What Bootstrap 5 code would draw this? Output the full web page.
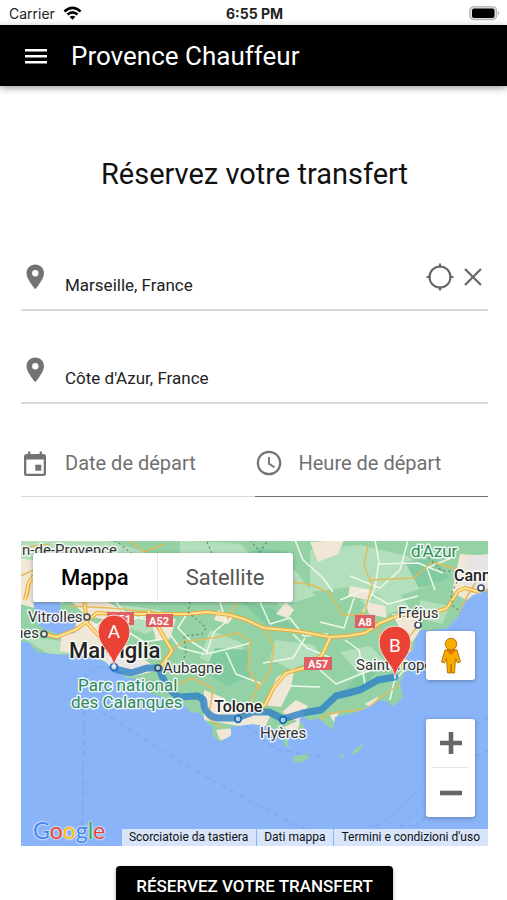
<!DOCTYPE html>
<html lang="fr">
<head>
<meta charset="utf-8">
<meta name="viewport" content="width=device-width, initial-scale=1">
<title>Provence Chauffeur</title>
<link href="https://cdn.jsdelivr.net/npm/bootstrap@5.3.0/dist/css/bootstrap.min.css" rel="stylesheet">
<style>
  body { font-family: Roboto, "Liberation Sans", sans-serif; color: #222; background: #fff; }
  .status-bar { height: 25px; padding: 2px 7px 0 9px; font: 14px Inter, sans-serif; color: #222; }
  .status-bar > * { flex: 1 1 0; }
  .status-bar strong { font-weight: 700; }
  .app-bar { min-height: 61px; padding: 0 24px; gap: 23px; box-shadow: 0 2px 7px rgba(0,0,0,.4); }
  .app-title { font-size: 26px; line-height: 32px; color: #fff; }
  .booking { padding: 0 19px 0 21px; }
  .booking h1 { font-size: 29px; line-height: 36px; font-weight: 400; color: #111; margin: 70px 0 52px; }
  .trip-form { gap: 26px; }
  .field { height: 67px; border-bottom: 2px solid #d9d9d9; gap: 16px; }
  .field svg { flex: none; }
  .field > svg { width: 28px; color: #737373; }
  .field input { border: 0; background: none; outline: 0; min-width: 0; flex: 1; padding: 0; color: #222; }
  .place input { font-size: 17px; padding-top: 18px; }
  .when { border-bottom: 1px solid #d9d9d9; }
  .when input { font-size: 20px; width: 100%; }
  .when input::placeholder { color: #707070; opacity: 1; }
  .when-time { border-color: #707070; }
  .plain { border: 0; background: none; padding: 0; color: #666; line-height: 0; }
  .map-box { aspect-ratio: 467 / 305; margin-top: 44px; background: #8ab4f8; }
  .map-types { top: 12px; left: 12px; }
  .map-panel { background: #fff; border-radius: 3px; box-shadow: 0 1px 4px rgba(0,0,0,.3); }
  .map-types button { border: 0; background: none; height: 49px; font-size: 22px; color: #565656; padding: 0 28px; }
  .map-types button.active { color: #000; font-weight: 500; border-right: 1px solid #e6e6e6; }
  .map-tools { right: 13px; bottom: 29px; width: 49px; gap: 39px; }
  .map-tools button { border: 0; background: none; width: 49px; height: 49px; padding: 0; line-height: 0; color: #666; }
  .zoom-in::after { content: ""; display: block; margin: 12px 6px 0; height: 1px; background: #e6e6e6; }
  .zoom-in { padding-top: 12px !important; }
  .map-legal { right: 0; bottom: 0; gap: 1px; font-size: 12px; line-height: 17px; }
  .map-legal a { background: rgba(225,234,248,.88); color: #111; padding: 0 8px 0 7px; text-decoration: none; }
  .map-logo { left: 12px; bottom: 2px; font: 400 23px/28px Lato, sans-serif; text-decoration: none; -webkit-text-stroke: 3px #fff; paint-order: stroke fill; }
  .map-logo span { position: relative; -webkit-text-stroke: 0; text-shadow: 0 0 2px #fff, 0 0 2px #fff; }
  .g-blue { color: #4285f4; } .g-red { color: #ea4335; } .g-yellow { color: #fbbc05; } .g-green { color: #34a853; }
  .submit { margin-top: 20px; padding: 0 20px; height: 41px; font-size: 17px; font-weight: 500; color: #fff; background: #000; border: 0; border-radius: 4px; box-shadow: 0 2px 4px rgba(0,0,0,.3); }
  .lbl { fill: #333; stroke: #fff; stroke-width: 3px; stroke-opacity: .85; paint-order: stroke; stroke-linejoin: round; font-size: 15px; }
  .lbl-city { font-weight: 500; fill: #222; font-size: 16px; }
  .lbl-main { font-size: 22px; }
  .lbl-park { fill: #2e8b57; font-size: 17px; }
  .shield { fill: #fff; font-size: 11px; font-weight: 700; text-anchor: middle; }
</style>
<script src="https://cdn.jsdelivr.net/npm/bootstrap@5.3.0/dist/js/bootstrap.bundle.min.js"></script>
</head>
<body>
<div class="status-bar d-flex align-items-center">
  <span class="d-flex align-items-center gap-2">Carrier
    <svg width="19" height="15" viewBox="0 0 20 15" fill="none" stroke="#000" stroke-width="2.800"><path d="M1.500 5.300Q10-2 18.500 5.300M4.700 8.500Q10 4 15.300 8.500"/><path d="M10 14l-3-3q3-2.500 6 0z" fill="#000" stroke="none"/></svg>
  </span>
  <strong class="text-center">6:55 PM</strong>
  <span class="d-flex justify-content-end">
    <svg width="31" height="15" viewBox="0 0 31 15"><rect x=".7" y=".7" width="27" height="13" rx="4" fill="#ddd" stroke="#aaa"/><rect x="3" y="2.500" width="22.500" height="9.500" rx="2" fill="#000"/><path d="M29 5q2 2 0 4.500z" fill="#aaa"/></svg>
  </span>
</div>
<header class="app-bar d-flex align-items-center bg-black position-relative">
  <button class="plain" type="button" aria-label="Menu"><svg width="24" height="18" viewBox="0 0 24 18" fill="#fff"><path d="M1 2h22v2.500H1zM1 8h22v2.500H1zM1 14h22v2.500H1z"/></svg></button>
  <span class="app-title">Provence Chauffeur</span>
</header>

<main class="booking">
  <h1 class="text-center">Réservez votre transfert</h1>
  <form class="trip-form d-flex flex-column">
    <div class="field place d-flex align-items-center">
      <svg height="26" viewBox="0 0 28 26"><path fill="currentColor" fill-rule="evenodd" d="M14.300.5C9.300.5 5.500 4.400 5.500 9.200c0 6.300 8.800 16 8.800 16s8.700-9.700 8.700-16C23 4.400 19.300.5 14.300.5zm0 5.500a3.200 3.200 0 1 1 0 6.400 3.200 3.200 0 0 1 0-6.400z"/></svg>
      <input type="text" aria-label="Lieu de départ" value="Marseille, France">
      <div class="d-flex align-items-center gap-2 pe-1">
        <button class="plain" type="button" aria-label="Me localiser"><svg width="28" height="28" viewBox="0 0 28 28" fill="none" stroke="currentColor" stroke-width="2.100"><circle cx="14" cy="14" r="10.500"/><path d="M14 .5v4M14 23.500v4M.5 14h4M23.500 14h4"/></svg></button>
        <button class="plain" type="button" aria-label="Effacer"><svg width="22" height="22" viewBox="0 0 22 22" fill="none" stroke="currentColor" stroke-width="2.200"><path d="M3 3l16 16M19 3L3 19"/></svg></button>
      </div>
    </div>
    <div class="field place d-flex align-items-center">
      <svg height="26" viewBox="0 0 28 26"><path fill="currentColor" fill-rule="evenodd" d="M14.300.5C9.300.5 5.500 4.400 5.500 9.200c0 6.300 8.800 16 8.800 16s8.700-9.700 8.700-16C23 4.400 19.300.5 14.300.5zm0 5.500a3.200 3.200 0 1 1 0 6.400 3.200 3.200 0 0 1 0-6.400z"/></svg>
      <input type="text" aria-label="Destination" value="Côte d'Azur, France">
    </div>
    <div class="row g-0">
      <div class="col-6 field when d-flex align-items-center">
        <svg height="28" viewBox="0 0 28 28"><path fill="currentColor" fill-rule="evenodd" d="M7 2.500h2.300V5h9.400V2.500H21V5h1.500a2.500 2.500 0 0 1 2.500 2.500v17a2.500 2.500 0 0 1-2.500 2.500h-17A2.500 2.500 0 0 1 3 24.500v-17A2.500 2.500 0 0 1 5.500 5H7zM5.300 10.500v14.200h17.400V10.500z"/><path fill="currentColor" d="M14.300 15.700h6v6h-6z"/></svg>
        <input type="text" aria-label="Date de départ" placeholder="Date de départ">
      </div>
      <div class="col-6 field when when-time d-flex align-items-center">
        <svg height="28" viewBox="0 0 28 28" fill="none" stroke="currentColor" stroke-width="2.200"><circle cx="14" cy="14" r="11.200"/><path d="M14 8v6.700l5.500 3.500" stroke-width="1.900"/></svg>
        <input type="text" aria-label="Heure de départ" placeholder="Heure de départ">
      </div>
    </div>
  </form>

  <div class="map-box position-relative overflow-hidden">
    <svg class="d-block w-100 h-100" viewBox="1 1 467 305" preserveAspectRatio="xMidYMid slice" role="img" aria-label="Itinéraire de Marseille à la Côte d'Azur">
      <defs><clipPath id="land"><path id="coast" d="M0 0H468V50L453 55 445 62 437 78 427 88 413 90 400 90 395 100 393 110 388 113 376 112 374 118 387 119 391 128 384 134 380 142 383 157 373 167 368 162 360 160 347 168 333 173 315 177 313 190 304 183 298 178 290 181 283 176 279 180 285 187 277 192 267 197 269 208 265 206 262 193 250 187 233 184 210 187 212 195 200 202 192 195 193 187 187 183 180 173 170 172 163 163 150 161 140 156 128 153 128 145 118 139 106 138 99 131 92 128 86 122 72 117 60 115 43 115 17 112 10 103 0 101Z"/></clipPath></defs>
      <path fill="#8ab4f8" d="M0 0h470v308H0z"/>
      <use href="#coast" fill="#94d2a5"/>
      <g clip-path="url(#land)">
        <g fill="#b4dfbd">
          <path d="M0 0h85l40 12-20 40-60 5-45-10zM100 65l40 5 15 12-30 12-30-12zM160 0l60 4 20 20-20 30-30-20-30 5zM290 10l50-5 50 12 15 30-35 12-40-12-40 5zM190 90l30 12 10 20-25 8-25-12zM255 100l40 5 5 14-30 10-20-10zM320 112l30-6 15 15-25 14zM400 60l30 6-8 18-22-6zM235 40l40-10 20 26-35 10zM0 96l50 6 20 10-40 3zM340 60l40-6 10 14-30 8z"/>
        </g>
        <g fill="#82caa0"><path d="M195 108l32 2 4 26-24 10-22-14zM222 62l30 6 24 20-30-3zM385 22l30-4 14 20-30 10zM335 138l22-8-12 18-20 2zM105 138l30 2 10 10-18 8zM215 20l24-12 28 4-14 20z"/></g>
        <g fill="#f1e7d6">
          <path d="M0 18l28 6 20 12-4 26-22 8-22-6zM50 60l34 0 18 10-14 10-22-4zM42 85l26-6 18 10 4 14-26 12-24-4zM70 100l34 4 24 18 12 8-30 7-24-12zM130 75l26 4-6 20-14 2zM184 150l20 8 8 12 20-2 18 8-6 14-60-10zM266 62l8 8-6 8-12-4zM243 165l14-28 18-10-4 20-10 20zM262 172l14-12 12 6-10 16zM330 46l22 4-4 10-20-4zM372 74l22 0 8 14-10 14-10-10zM395 110l-15 0-8 8 16 4zM440 14l28 2v36l-22 8-14-8zM290 2l34-2-6 14-20 8zM310 175l8-2-2 14zM345 164l14-8-8 12zM196 190l16-2-2 10-10 2zM262 188l18-8-2 10zM345 62l20 4 2 12-18-4zM198 70l16 6-6 8-14-4z"/>
          <path fill="#e7e5e3" d="M448 16l20-2v34l-18 8-8-14zM82 112l30 6 18 10-26 4-18-8z"/>
        </g>
        <path fill="#8ab4f8" d="M13 62h27l1 12h22l-7 9-1 10-15 2-20-8-4-13z"/>
        <g fill="none" stroke="#eef7ea" stroke-width="1.500" stroke-linejoin="round">
          <path d="M275 0l8 20 20 18 10 14M200 62l6 20-12 10-8 22 22-5 22-6M168 72l-10 16 14 14 16 10M240 62l10 22 20-6 14 18 24-2M285 98l-12 20-30 5M273 94l14 14 24 10M206 112l10 22 26 10M355 0l4 22-4 26-12 24M358 24l40-1 25 10M388 0l-8 30-20 18-30-12M300 130l16 14 40-16M320 60l24-10 24 14 30-8M325 100l14 10 6 34M270 146l30 1M150 94l10 14 24 6M96 62l14 18 30-8M108 92l16 10 24-4M72 88l24-16 40 10M300 82l24 6 10-30M384 130l-10 12-4 18M415 50l-8-22 24-10M20 30l30 10 60 2"/>
        </g>
        <g fill="none" stroke="#e3bb58" stroke-width="1.500" stroke-linejoin="round">
          <path d="M150 112l12-10 30-4 26-5 12 8-2 28 10 16-8 20M246 91l8 16-4 24-14 20M272 42l20 3 18 8 12 22 22 0 8-30-8-20 4-20M350 40l44-2 18-16 34 10M340 72l18 12 2 22M240 166l30 16M290 185l20-12 36-4 18-14 20-14M398 86l-10 12 4 16-12 12M437 80l8-20 12-20M150 148l22-10 20 10 0 10M192 158l-4 20 14 10M0 36l18-8 16-18 42 6M8 56l4-22M110 0l14 12 20-8M207 79l10-16M50 66l40 2 60 6M0 8l30-4"/>
        </g>
        <path fill="none" stroke="#e8aa38" stroke-width="4" stroke-linejoin="round" d="M63 50l4 33 13 14 10 18M24 94l13 3 20-8 20-16 20 1 35 0 35 0 20-2 23 3 14 4 20 9 33 3 33 6 17-1 18-3 15-10 20-8 27 0 20-7 11-17 7-3 18 5 14-7 10-10-12-18M310 98l-8 17-18 13-18 5-12 14-9 18-27 12M128 70l15 25 9 16-12 17M5 60l4-18 14-16 22 0"/>
        <path fill="none" stroke="#fde293" stroke-width="2" stroke-linejoin="round" d="M63 50l4 33 13 14 10 18M24 94l13 3 20-8 20-16 20 1 35 0 35 0 20-2 23 3 14 4 20 9 33 3 33 6 17-1 18-3 15-10 20-8 27 0 20-7 11-17 7-3 18 5 14-7 10-10-12-18M310 98l-8 17-18 13-18 5-12 14-9 18-27 12M128 70l15 25 9 16-12 17M5 60l4-18 14-16 22 0"/>
        <path fill="none" stroke="#66806f" stroke-width="1.200" stroke-dasharray="2 3" d="M170 62l-2 10 18 16-4 6-18 2 2 16-4 12M95 0l20 16M187 2l6 14M230 0l10 12 8-12M405 14l16 16 14 2M437 42l-6 12 2 12 8 6"/>
      </g>
      <path fill="#94d2a5" d="M273 217l17-4-2 5-8 5-6-1zM318 217l7-4-1 3-5 2zM332 214l3-5 9-6-3 6-6 5z"/>
      <g fill="none" stroke="#7aa3ea" stroke-width="1" stroke-dasharray="6 4">
        <path d="M64 170l-2 136M82 172l78 50 90 50 70 34M94 128q-30-4-28 12M225 185l30 24 45 8M354 287l20-12 28-30M380 287l30-28M394 287l24-20M455 185l13-8M455 216l13-5"/>
      </g>
      <path fill="none" stroke="#2f83c7" stroke-opacity=".82" stroke-width="7" stroke-linejoin="round" stroke-linecap="round" d="M95 129l16 4 16-5 12 0q7 22 20 29l18-1q8 2 7 10 3 10 13 12h20l16-6h16l14 7 20-6 18-3 15-14 24-6 18-10 17-3"/>
      <g fill="#fff" fill-opacity=".55" stroke="#3c5068" stroke-width="1.700"><circle cx="67" cy="77" r="3"/><circle cx="24" cy="94" r="3"/><circle cx="138" cy="128" r="3"/><circle cx="398" cy="85" r="3" fill-opacity="1"/><circle cx="461" cy="48" r="3" fill-opacity="1"/><circle cx="94" cy="127" r="3.500" stroke="#1967b5"/><circle cx="218" cy="179" r="3.300" stroke="#1967b5"/><circle cx="263" cy="180" r="3.300" stroke="#1967b5"/></g>
      <path fill="#df6063" d="M87 72h27v13H87zM126 74h27v13h-27zM284 117h28v13h-28zM335 75h20v13h-20z"/>
      <text class="shield" x="101" y="83">A51</text><text class="shield" x="139" y="85">A52</text><text class="shield" x="298" y="128">A57</text><text class="shield" x="345" y="86">A8</text>
      <text class="lbl" x="2" y="15">n-de-Provence</text>
      <text class="lbl" x="8" y="82">Vitrolles</text>
      <text class="lbl" x="19" y="98" text-anchor="end">gues</text>
      <text class="lbl lbl-city lbl-main" x="49" y="118">Marsiglia</text>
      <text class="lbl" x="143" y="133">Aubagne</text>
      <text class="lbl lbl-park" x="58" y="151">Parc national</text>
      <text class="lbl lbl-park" x="51" y="168">des Calanques</text>
      <text class="lbl lbl-city" x="194" y="172">Tolone</text>
      <text class="lbl" x="240" y="198">Hyères</text>
      <text class="lbl lbl-park" x="391" y="17">d'Azur</text>
      <text class="lbl lbl-city" x="434" y="41">Cannes</text>
      <text class="lbl" x="378" y="78">Fréjus</text>
      <text class="lbl" x="336" y="130">Saint-Tropez</text>
      <g stroke="#fff" stroke-width=".8" fill="#ea4335"><path id="pin" d="M94 128C93 112 78 107 78 91a16 16 0 0 1 32 0c0 16-15 21-16 37z"/><use href="#pin" x="281" y="11"/></g>
      <g fill="#fff" font-size="19" text-anchor="middle"><text x="94" y="98">A</text><text x="375" y="112">B</text></g>
    </svg>

    <div class="map-types map-panel position-absolute d-flex">
      <button type="button" class="active">Mappa</button>
      <button type="button">Satellite</button>
    </div>
    <div class="map-tools position-absolute d-flex flex-column">
      <div class="map-panel"><button type="button" aria-label="Street View"><svg width="24" height="40" viewBox="0 0 24 40"><g fill="#f9ab00" stroke="#b87908" stroke-width="1"><path d="M6 14q6-2 12 0l3.500 12-3 1-2-5-1 15h-3L12 28l-.5 9h-3L7.500 22l-2 5-3-1z"/><circle cx="12" cy="8" r="5.800"/></g><path d="M7 14h10L12 19z" fill="#e37400"/></svg></button></div>
      <div class="map-panel">
        <button type="button" class="zoom-in" aria-label="Zoom avant"><svg width="24" height="24" viewBox="0 0 24 24" fill="currentColor"><path d="M9.700 1h4.600v8.700H23v4.600h-8.700V23H9.700v-8.700H1V9.700h8.700z"/></svg></button>
        <button type="button" aria-label="Zoom arrière"><svg width="24" height="24" viewBox="0 0 24 24" fill="currentColor"><path d="M1 9.700h22v4.600H1z"/></svg></button>
      </div>
    </div>
    <a class="map-logo position-absolute" href="#" aria-label="Google"><span class="g-blue">G</span><span class="g-red">o</span><span class="g-yellow">o</span><span class="g-blue">g</span><span class="g-green">l</span><span class="g-red">e</span></a>
    <div class="map-legal position-absolute d-flex">
      <a href="#">Scorciatoie da tastiera</a><a href="#">Dati mappa</a><a href="#">Termini e condizioni d'uso</a>
    </div>
  </div>
  <div class="text-center"><button type="button" class="submit">RÉSERVEZ VOTRE TRANSFERT</button></div>
</main>
</body>
</html>
